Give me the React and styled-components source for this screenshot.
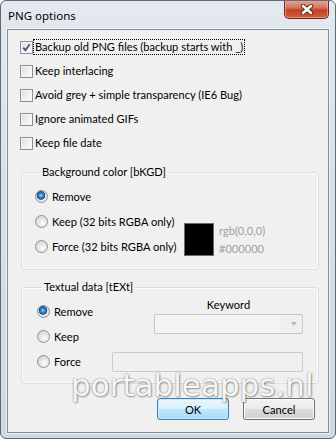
import React from "react";
import styled, { createGlobalStyle } from "styled-components";

const GlobalStyle = createGlobalStyle`
  html, body {
    margin: 0;
    padding: 0;
    background: #ffffff;
  }
  body {
    font-family: Lato, "Noto Sans", "DejaVu Sans", sans-serif;
    font-size: 11.1px;
    color: #000;
  }
`;

const options = [
  { label: "Backup old PNG files (backup starts with _)", checked: true, focused: true },
  { label: "Keep interlacing" },
  { label: "Avoid grey + simple transparency (IE6 Bug)" },
  { label: "Ignore animated GIFs" },
  { label: "Keep file date" },
];

export default function App() {
  return (
    <>
      <GlobalStyle />
      <Window>
        <TitleBar>
          <Title>PNG options</Title>
          <CloseButton>
            <svg width="14" height="11" viewBox="0 0 14 11">
              <path d="M3 2 L11 9 M11 2 L3 9" stroke="#5a2418" strokeWidth="4.4" strokeLinecap="round" />
              <path d="M3 2 L11 9 M11 2 L3 9" stroke="#ffffff" strokeWidth="2.6" strokeLinecap="round" />
            </svg>
          </CloseButton>
        </TitleBar>

        <Client>
          <CheckList>
            {options.map((o) => (
              <CheckRow key={o.label}>
                <CheckBox checked={o.checked}>
                  {o.checked && (
                    <svg width="11" height="11" viewBox="0 0 11 11">
                      <path d="M2.2 5.6 L4.4 8.2 L8.8 2.2" fill="none" stroke="#3f5a8e" strokeWidth="1.9" />
                    </svg>
                  )}
                </CheckBox>
                <Label focused={o.focused}>{o.label}</Label>
              </CheckRow>
            ))}
          </CheckList>

          <Group>
            <Legend>Background color [bKGD]</Legend>
            <OptionRow>
              <Radio selected />
              <span>Remove</span>
            </OptionRow>
            <BgColorRow>
              <RadioColumn>
                <OptionRow>
                  <Radio />
                  <span>Keep (32 bits RGBA only)</span>
                </OptionRow>
                <OptionRow>
                  <Radio />
                  <span>Force (32 bits RGBA only)</span>
                </OptionRow>
              </RadioColumn>
              <Swatch />
              <ColorText>
                <div>rgb(0,0,0)</div>
                <div>#000000</div>
              </ColorText>
            </BgColorRow>
          </Group>

          <Group second>
            <Legend>Textual data [tEXt]</Legend>
            <TextGrid>
              <OptionRow>
                <Radio selected />
                <span>Remove</span>
              </OptionRow>
              <KeywordBox>
                <KeywordLabel>Keyword</KeywordLabel>
                <Combo>
                  <ComboArrow />
                </Combo>
              </KeywordBox>
              <OptionRow>
                <Radio />
                <span>Keep</span>
              </OptionRow>
              <OptionRow>
                <Radio />
                <span>Force</span>
              </OptionRow>
              <TextField />
            </TextGrid>
          </Group>

          <ButtonRow>
            <Button isDefault>OK</Button>
            <Button>Cancel</Button>
          </ButtonRow>
        </Client>

        <Watermark>portableapps.nl</Watermark>
      </Window>
    </>
  );
}

const Window = styled.div`
  position: relative;
  box-sizing: border-box;
  width: 336px;
  height: 439px;
  display: flex;
  flex-direction: column;
  border: 1px solid #5e6b78;
  border-radius: 6px;
  overflow: hidden;
  background: linear-gradient(180deg, #e4e9ef 0%, #d8e0e9 40%, #d0d9e3 100%);
`;

const TitleBar = styled.div`
  height: 28px;
  flex: none;
  display: flex;
  justify-content: space-between;
  align-items: flex-start;
  padding: 0 6px 0 7px;
`;

const Title = styled.div`
  font-family: "Noto Sans", sans-serif;
  font-size: 11.5px;
  line-height: 14px;
  margin-top: 8px;
  color: #000;
`;

const CloseButton = styled.div`
  box-sizing: border-box;
  width: 45px;
  height: 19px;
  margin-top: -1px;
  display: flex;
  align-items: center;
  justify-content: center;
  border: 1px solid #6b2a1d;
  border-top: none;
  border-radius: 0 0 5px 5px;
  background: linear-gradient(180deg, #e9a897 0%, #d4705a 45%, #c13f22 55%, #d2613f 100%);
  box-shadow: inset 0 0 0 1px rgba(255, 200, 180, 0.5);
`;

const Client = styled.div`
  flex: 1;
  margin: 0 6px 5px 6px;
  border: 1px solid #7f8e9c;
  background: #f0f0f0;
  display: flex;
  flex-direction: column;
  box-shadow: 0 0 0 1px rgba(255, 255, 255, 0.6);
`;

const CheckList = styled.div`
  padding: 5px 0 0 12px;
`;

const CheckRow = styled.div`
  height: 24px;
  display: flex;
  align-items: center;
  gap: 1px;
`;

const CheckBox = styled.div`
  box-sizing: border-box;
  width: 13px;
  height: 13px;
  border: 1px solid #8e8f8f;
  display: flex;
  align-items: center;
  justify-content: center;
  background: linear-gradient(135deg, #dcdcdc 0%, #f2f2f2 60%, #ffffff 100%);
  box-shadow: inset 0 0 0 1px #f4f4f4;
`;

const Label = styled.span`
  padding: 0 1px;
  line-height: 14px;
  outline: ${(p) => (p.focused ? "1px dotted #000" : "none")};
`;

const Group = styled.fieldset`
  margin: 10px 9px 0 13px;
  padding: 5px 15px ${(p) => (p.second ? "9px" : "10px")} ${(p) => (p.second ? "15px" : "13px")};
  border: 1px solid #d5dfe5;
  border-radius: 3px;
  box-shadow: inset 0 0 0 1px #fbfbfb;
  min-width: 0;
`;

const Legend = styled.legend`
  margin-left: 5px;
  padding: 0 2px;
  line-height: 14px;
`;

const OptionRow = styled.div`
  height: 25px;
  display: flex;
  align-items: center;
  gap: 4px;
  white-space: nowrap;
`;

const Radio = styled.div`
  box-sizing: border-box;
  width: 13px;
  height: 13px;
  border-radius: 50%;
  border: 1px solid #8c8e90;
  flex: none;
  background: ${(p) =>
    p.selected
      ? "radial-gradient(circle at 45% 40%, #9ed2f5 0px, #3a8ccb 2px, #1a4f86 4px, #dfe3e7 4.6px, #f4f4f4 100%)"
      : "radial-gradient(circle at 60% 65%, #ffffff 0px, #e6e6e6 4px, #cfcfcf 100%)"};
`;

const BgColorRow = styled.div`
  display: flex;
  align-items: flex-start;
`;

const RadioColumn = styled.div`
  width: 149px;
  flex: none;
`;

const Swatch = styled.div`
  box-sizing: border-box;
  width: 30px;
  height: 33px;
  margin-top: 14px;
  background: #000;
  border: 1px solid #6a6a6a;
`;

const ColorText = styled.div`
  margin: 13px 0 0 5px;
  color: #a0a0a0;
  line-height: 18px;
`;

const TextGrid = styled.div`
  display: grid;
  grid-template-columns: 75px 1fr;
  grid-template-rows: 25px 25px 25px;
`;

const KeywordBox = styled.div`
  grid-column: 2;
  grid-row: 1 / span 2;
  justify-self: end;
  width: 149px;
  display: flex;
  flex-direction: column;
  align-items: stretch;
`;

const KeywordLabel = styled.div`
  text-align: center;
  line-height: 12px;
  margin-bottom: 3px;
`;

const Combo = styled.div`
  box-sizing: border-box;
  height: 20px;
  border: 1px solid #c4c7ca;
  border-radius: 2px;
  background: linear-gradient(90deg, #f4f4f4 0%, #f4f4f4 86%, #f0f0f0 86%);
  display: flex;
  justify-content: flex-end;
  align-items: center;
  padding-right: 5px;
`;

const ComboArrow = styled.div`
  width: 0;
  height: 0;
  border-left: 3.5px solid transparent;
  border-right: 3.5px solid transparent;
  border-top: 4px solid #b8b8b8;
`;

const TextField = styled.div`
  grid-column: 2;
  grid-row: 3;
  align-self: center;
  box-sizing: border-box;
  height: 20px;
  border: 1px solid #cbcbcb;
  background: #f0f0f0;
  border-radius: 1px;
`;

const ButtonRow = styled.div`
  display: flex;
  justify-content: flex-end;
  gap: 14px;
  margin-top: 14px;
  padding-right: 13px;
`;

const Button = styled.div`
  box-sizing: border-box;
  width: 72px;
  height: 22px;
  display: flex;
  align-items: center;
  justify-content: center;
  border-radius: 3px;
  border: 1px solid ${(p) => (p.isDefault ? "#3c7fb1" : "#707070")};
  background: ${(p) =>
    p.isDefault
      ? "linear-gradient(180deg, #eaf6fd 0%, #d9f0fc 50%, #bee6fd 51%, #a7d9f5 100%)"
      : "linear-gradient(180deg, #f2f2f2 0%, #ebebeb 50%, #dddddd 51%, #cfcfcf 100%)"};
  box-shadow: inset 0 0 0 1px ${(p) => (p.isDefault ? "#c8eafc" : "#fcfcfc")};
  color: #000;
`;

const Watermark = styled.div`
  position: absolute;
  left: 70px;
  top: 369px;
  font-family: "DejaVu Sans", sans-serif;
  font-size: 31px;
  line-height: 31px;
  color: rgba(255, 255, 255, 0.95);
  text-shadow: 0 0 2px rgba(0, 0, 0, 0.45), 1px 1px 2px rgba(0, 0, 0, 0.3);
  pointer-events: none;
  white-space: nowrap;
`;
